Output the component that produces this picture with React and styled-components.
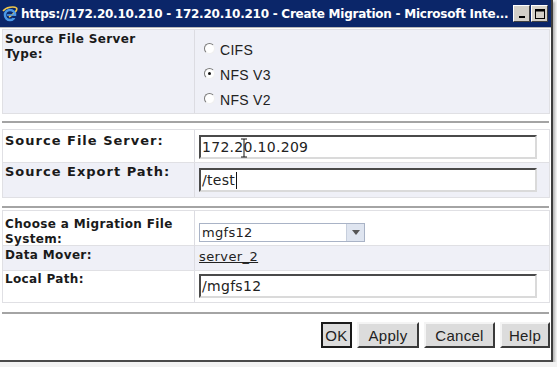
import styled, { createGlobalStyle } from "styled-components";

const GlobalStyle = createGlobalStyle`
  html, body {
    margin: 0;
    padding: 0;
    background: #f2f2f2;
    overflow: hidden;
  }
`;

const Window = styled.div`
  width: 551px;
  height: 360px;
  background: #ffffff;
  border-right: 2px solid #3c3c3c;
  border-bottom: 2px solid #4a4a4a;
  box-shadow: 2px 2px 2px rgba(0, 0, 0, 0.25);
  display: flex;
  flex-direction: column;
  overflow: hidden;
`;

const TitleBar = styled.div`
  height: 27px;
  background: #0b2669;
  border-bottom: 1px solid #b8b8b8;
  display: flex;
  align-items: center;
  padding: 0 2px 0 2px;
  gap: 3px;
`;

const TitleText = styled.div`
  flex: 1;
  color: #ffffff;
  font-family: "DejaVu Sans", Verdana, sans-serif;
  font-weight: bold;
  font-size: 12px;
  letter-spacing: -0.25px;
  white-space: nowrap;
`;

const CaptionButtons = styled.div`
  display: flex;
  gap: 1px;
  margin-right: 1px;
`;

const CaptionButton = styled.div`
  width: 17px;
  height: 17px;
  box-sizing: border-box;
  background: #d4d0c8;
  border: 1px solid;
  border-color: #ffffff #404040 #404040 #ffffff;
  display: flex;
  align-items: center;
  justify-content: center;
`;

const Body = styled.div`
  padding: 1px 1px 0 2px;
  display: flex;
  flex-direction: column;
`;

const Table = styled.div`
  border: 1px solid #e0e0e4;
  border-bottom: none;
  margin-top: ${(p) => p.$top || 0}px;
`;

const Row = styled.div`
  display: grid;
  grid-template-columns: 192px 1fr;
  height: ${(p) => p.$h}px;
  background: ${(p) => (p.$shade ? "#eff0f7" : "#ffffff")};
  border-bottom: 1px solid #e0e0e4;
  box-sizing: border-box;
`;

const Label = styled.div`
  border-right: 1px solid #dcdce2;
  padding: ${(p) => p.$top || 0}px 0 0 2px;
  font-family: "DejaVu Sans", Verdana, sans-serif;
  font-weight: bold;
  font-size: ${(p) => (p.$wide ? 13 : 12)}px;
  letter-spacing: ${(p) => (p.$wide ? 1 : 0.35)}px;
  line-height: ${(p) => (p.$wide ? 16 : 15)}px;
  white-space: nowrap;
  color: #1a1a1a;
`;

const Field = styled.div`
  padding: ${(p) => p.$top || 0}px 12px 0 4px;
  display: flex;
  flex-direction: column;
`;

const RadioList = styled.div`
  display: flex;
  flex-direction: column;
  gap: 11px;
  padding-left: 5px;
`;

const RadioOption = styled.label`
  display: flex;
  align-items: center;
  gap: 5px;
  height: 14px;
  font-family: "Liberation Sans", Arial, sans-serif;
  font-size: 14px;
  letter-spacing: 0.3px;
  color: #222;
`;

const RadioDot = styled.span`
  width: 11px;
  height: 11px;
  margin-top: -4px;
  box-sizing: border-box;
  border-radius: 50%;
  border: 1px solid;
  border-color: #7a7a7a #f0f0f0 #f0f0f0 #7a7a7a;
  background: #ffffff;
  display: flex;
  align-items: center;
  justify-content: center;
  &::after {
    content: "";
    width: 3px;
    height: 3px;
    border-radius: 50%;
    background: ${(p) => (p.$checked ? "#111" : "transparent")};
  }
`;

const TextBox = styled.div`
  position: relative;
  height: ${(p) => p.$h || 24}px;
  box-sizing: border-box;
  border: 2px solid;
  border-color: #4a4a4a #dadada #dadada #4a4a4a;
  background: #fff;
  padding: 0 0 0 1px;
  font-family: "DejaVu Sans", Verdana, sans-serif;
  font-size: 14px;
  letter-spacing: 0.3px;
  line-height: 20px;
  color: #222;
  display: flex;
  align-items: center;
`;

const Caret = styled.span`
  display: inline-block;
  width: 1px;
  height: 17px;
  background: #111;
  margin-left: 1px;
`;

const IBeam = styled.svg`
  position: absolute;
  left: 39px;
  top: 1px;
`;

const Select = styled.div`
  width: 166px;
  height: 19px;
  box-sizing: border-box;
  border: 1px solid #a9b3c6;
  background: #fff;
  display: flex;
  align-items: stretch;
  font-family: "DejaVu Sans", Verdana, sans-serif;
  font-size: 13px;
  letter-spacing: 0.3px;
  color: #222;
`;

const SelectValue = styled.div`
  flex: 1;
  padding-left: 2px;
  line-height: 17px;
`;

const SelectArrow = styled.div`
  width: 17px;
  background: #dfe5f0;
  border-left: 1px solid #c7cfdd;
  display: flex;
  align-items: center;
  justify-content: center;
`;

const Link = styled.a`
  margin-top: 3px;
  font-family: "DejaVu Sans", Verdana, sans-serif;
  font-size: 13px;
  letter-spacing: 0.4px;
  color: #222;
  text-decoration: underline;
`;

const Divider = styled.div`
  height: 2px;
  background: #a4a4a4;
  margin-top: ${(p) => p.$top}px;
  margin-right: 1px;
`;

const ButtonBar = styled.div`
  display: flex;
  justify-content: flex-end;
  gap: 5px;
  margin-top: 8px;
`;

const Button = styled.button`
  width: ${(p) => p.$w}px;
  height: 26px;
  box-sizing: border-box;
  background: #dcdcdc;
  border: 2px solid;
  border-color: ${(p) =>
    p.$default ? "#1a1a1a" : "#f4f4f4 #3a3a3a #3a3a3a #f4f4f4"};
  padding: 0;
  font-family: "Liberation Sans", Arial, sans-serif;
  font-size: 15px;
  letter-spacing: 0.3px;
  color: #222;
  cursor: pointer;
`;

function IEIcon() {
  return (
    <svg width="16" height="16" viewBox="0 0 16 16">
      <path d="M1 5 C4 1 12 0 14.5 2 C16 4 12 8 7 11" fill="none" stroke="#f2c84b" strokeWidth="1.6" />
      <circle cx="8" cy="9" r="5" fill="none" stroke="#4a98e6" strokeWidth="2.6" />
      <rect x="5" y="8.2" width="7" height="1.6" fill="#4a98e6" />
      <rect x="11" y="10" width="3" height="2" fill="#0b2669" />
    </svg>
  );
}

export default function App() {
  return (
    <>
      <GlobalStyle />
      <Window>
        <TitleBar>
          <IEIcon />
          <TitleText>
            https://172.20.10.210 - 172.20.10.210 - Create Migration - Microsoft Inte...
          </TitleText>
          <CaptionButtons>
            <CaptionButton>
              <svg width="8" height="8" viewBox="0 0 8 8">
                <rect x="1" y="6" width="6" height="2" fill="#000" />
              </svg>
            </CaptionButton>
            <CaptionButton>
              <svg width="10" height="10" viewBox="0 0 10 10">
                <rect x="0.5" y="0.5" width="9" height="9" fill="none" stroke="#000" />
                <rect x="0.5" y="0.5" width="9" height="2" fill="#000" />
              </svg>
            </CaptionButton>
          </CaptionButtons>
        </TitleBar>

        <Body>
          <Table>
            <Row $h={84} $shade>
              <Label $top={2}>
                Source File Server
                <br />
                Type:
              </Label>
              <Field $top={13}>
                <RadioList>
                  <RadioOption>
                    <RadioDot />
                    CIFS
                  </RadioOption>
                  <RadioOption>
                    <RadioDot $checked />
                    NFS V3
                  </RadioOption>
                  <RadioOption>
                    <RadioDot />
                    NFS V2
                  </RadioOption>
                </RadioList>
              </Field>
            </Row>
          </Table>

          <Divider $top={7} />

          <Table $top={6}>
            <Row $h={33}>
              <Label $wide $top={3}>
                Source File Server:
              </Label>
              <Field $top={5}>
                <TextBox>
                  172.20.10.209
                  <IBeam width="8" height="20" viewBox="0 0 8 20">
                    <path d="M1 1h6M4 1v18M1 19h6" stroke="#111" strokeWidth="1" fill="none" />
                  </IBeam>
                </TextBox>
              </Field>
            </Row>
            <Row $h={35} $shade>
              <Label $wide $top={1}>
                Source Export Path:
              </Label>
              <Field $top={5}>
                <TextBox>
                  /test
                  <Caret />
                </TextBox>
              </Field>
            </Row>
          </Table>

          <Divider $top={8} />

          <Table $top={2}>
            <Row $h={35}>
              <Label $top={6}>
                Choose a Migration File
                <br />
                System:
              </Label>
              <Field $top={12}>
                <Select>
                  <SelectValue>mgfs12</SelectValue>
                  <SelectArrow>
                    <svg width="8" height="5" viewBox="0 0 8 5">
                      <path d="M0 0h8L4 5z" fill="#555" />
                    </svg>
                  </SelectArrow>
                </Select>
              </Field>
            </Row>
            <Row $h={25} $shade>
              <Label $top={2}>Data Mover:</Label>
              <Field>
                <Link>server_2</Link>
              </Field>
            </Row>
            <Row $h={32}>
              <Label $top={1}>Local Path:</Label>
              <Field $top={3}>
                <TextBox>/mgfs12</TextBox>
              </Field>
            </Row>
          </Table>

          <Divider $top={9} />

          <ButtonBar>
            <Button $w={31} $default>
              OK
            </Button>
            <Button $w={62}>Apply</Button>
            <Button $w={71}>Cancel</Button>
            <Button $w={50}>Help</Button>
          </ButtonBar>
        </Body>
      </Window>
    </>
  );
}
